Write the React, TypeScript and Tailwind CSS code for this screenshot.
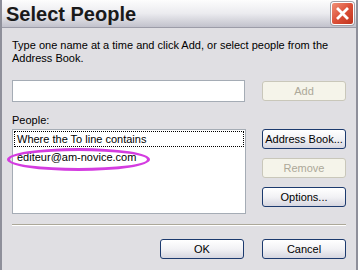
export default function App() {
  const btn =
    "h-[20px] w-[84px] rounded-[3px] border border-[#1c3a6e] bg-gradient-to-b from-white via-[#f2f2f5] to-[#d6d6e0] text-[11px] text-black flex items-center justify-center";
  const btnOff =
    "h-[20px] w-[84px] rounded-[3px] border border-[#c9c7ba] bg-[#f5f4ea] text-[11px] text-[#aca899] flex items-center justify-center";

  return (
    <div
      className="w-[358px] h-[270px] overflow-hidden bg-[#e0dfe3] flex flex-col border-l-2 border-r-2 border-[#8e8f9a]"
      style={{ fontFamily: '"Liberation Sans", Arial, sans-serif' }}
    >
      {/* title bar */}
      <div className="h-[28px] shrink-0 flex items-center justify-between pl-[4px] pr-[2px] bg-gradient-to-b from-[#fdfdfd] via-[#ebebef] to-[#c2c2cc] border-b border-[#9c9ca8]">
        <span className="text-[20px] font-bold text-[#1a1a1a]">Select People</span>
        <div className="w-[23px] h-[23px] rounded-[3px] border border-white bg-gradient-to-br from-[#f09078] via-[#dc5038] to-[#c0341e] flex items-center justify-center shadow-[0_0_0_1px_#a0a0a8]">
          <svg width="15" height="15" viewBox="0 0 15 15">
            <path d="M3 3 L12 12 M12 3 L3 12" stroke="white" strokeWidth="2.8" strokeLinecap="square" />
          </svg>
        </div>
      </div>

      <div className="flex flex-col px-[10px]">
        <p className="mt-[11px] text-[11px] leading-[13px] text-black">
          Type one name at a time and click Add, or select people from the
          <br />
          Address Book.
        </p>

        <div className="mt-[15px] flex items-center justify-between">
          <div className="w-[233px] h-[22px] bg-white border border-[#a5acb5]" />
          <div className={btnOff}>Add</div>
        </div>

        <div className="mt-[12px] text-[11px] leading-[13px] text-black">People:</div>

        <div className="mt-[2px] flex justify-between">
          <div className="relative w-[234px] h-[85px] bg-white border border-[#a5acb5] p-[1px]">
            <div className="h-[16px] border border-dotted border-black text-[11px] leading-[14px] text-black pl-[2px]">
              Where the To line contains
            </div>
            <div className="h-[15px] mt-[3px] text-[11px] leading-[15px] text-black pl-[3px]">
              editeur@am-novice.com
            </div>
            <div className="absolute left-[-6px] top-[18px] w-[143px] h-[23px] rounded-[50%] border-[3px] border-[#d43ce0]" />
          </div>
          <div className="flex flex-col gap-[9px]">
            <div className={btn}>Address Book...</div>
            <div className={btnOff}>Remove</div>
            <div className={btn}>Options...</div>
          </div>
        </div>

        <div className="mt-[10px] h-[2px] border-t border-[#aca899] border-b border-b-white" />

        <div className="mt-[13px] flex justify-end gap-[18px]">
          <div className={btn}>OK</div>
          <div className={btn}>Cancel</div>
        </div>
      </div>
    </div>
  );
}
